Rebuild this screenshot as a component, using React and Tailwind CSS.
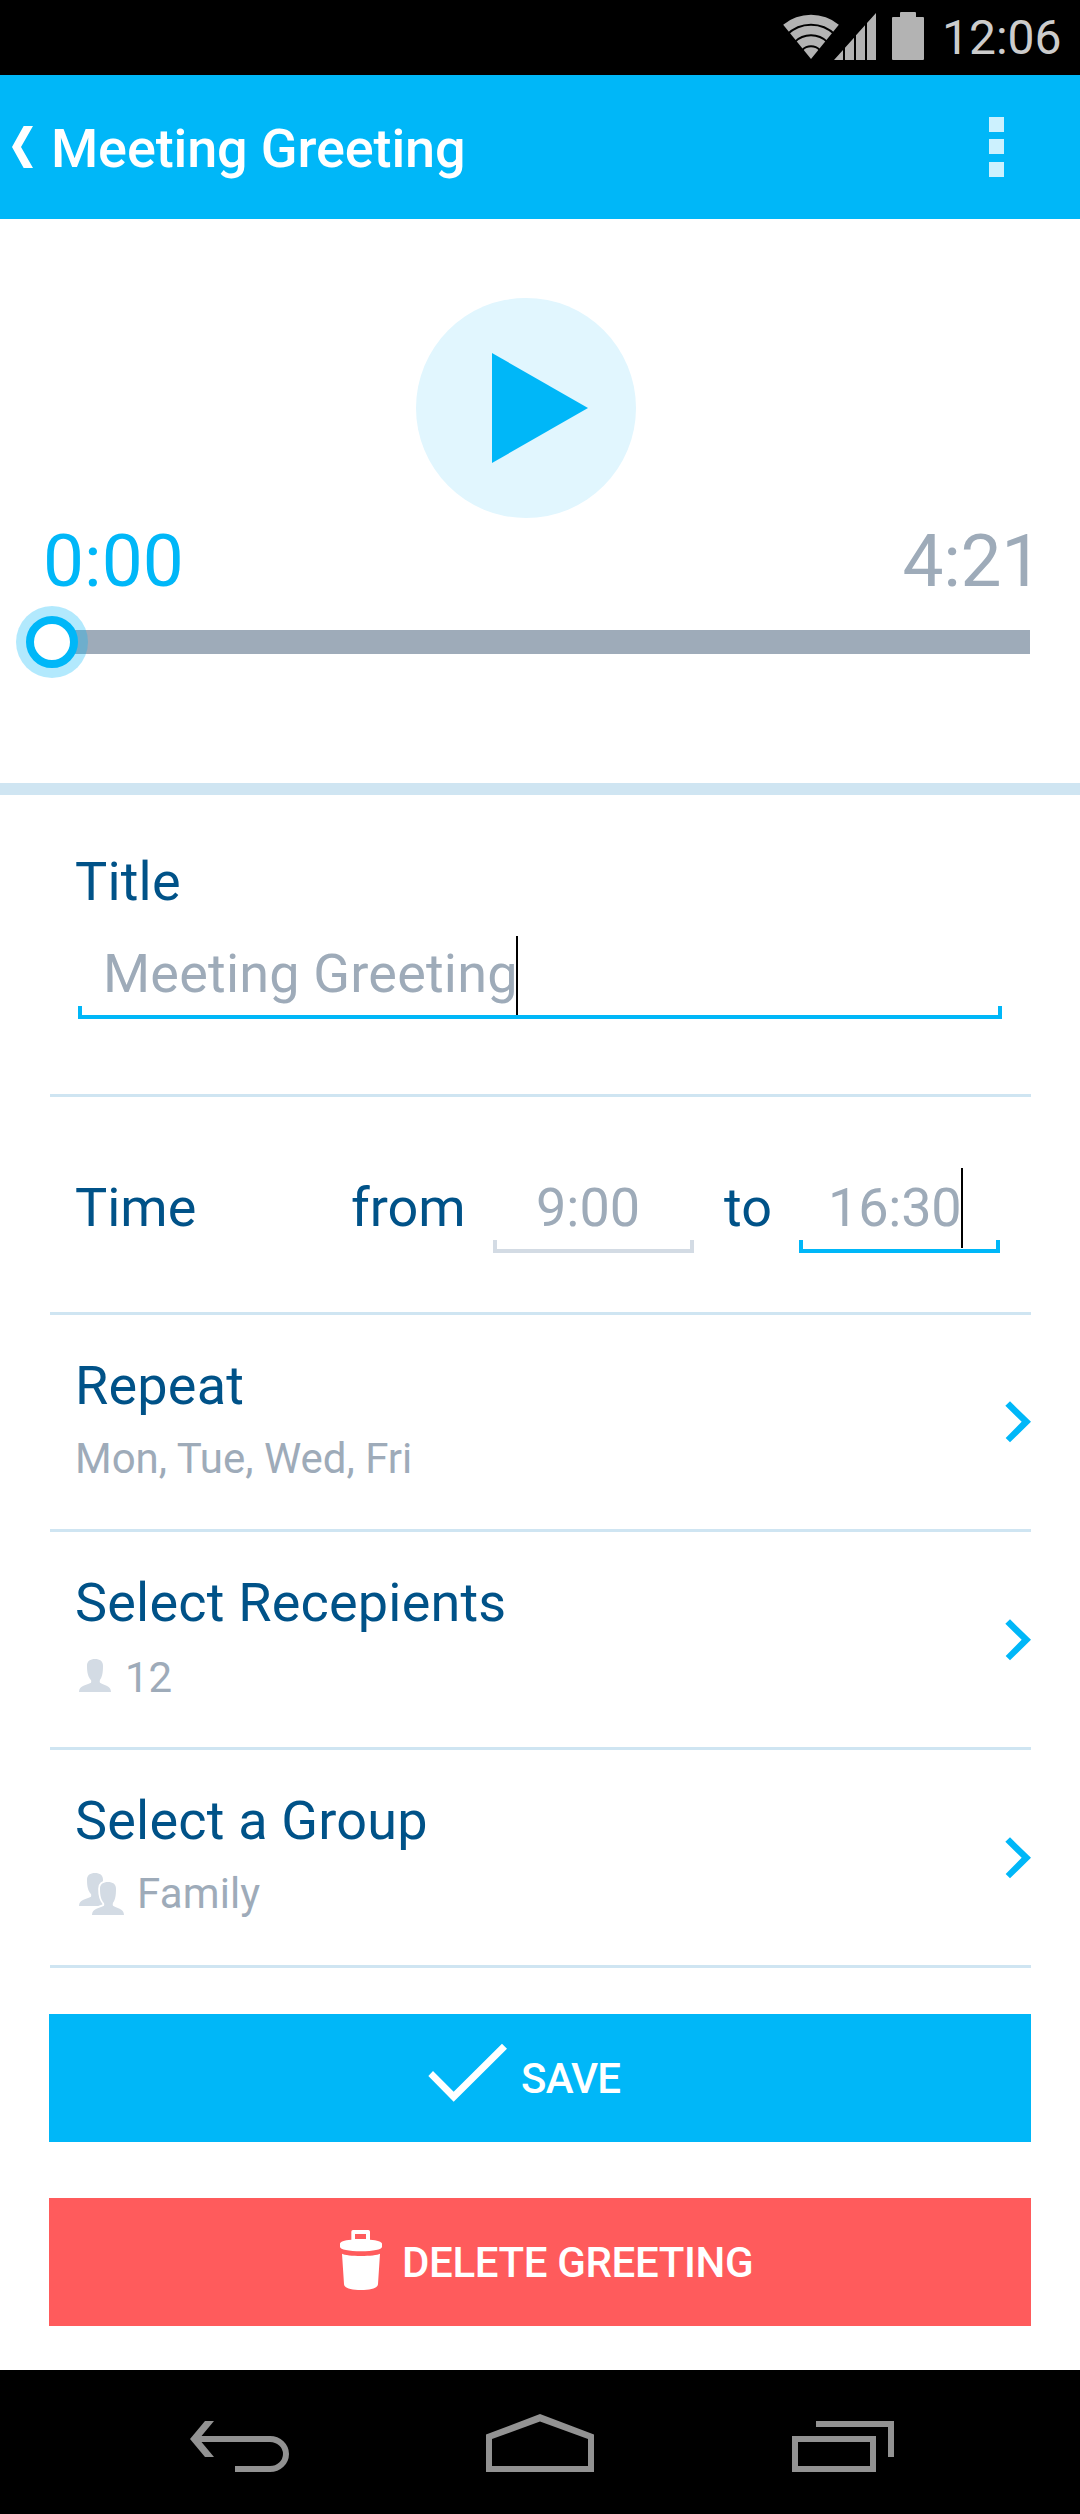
import React from "react";

const PERSON =
  "M48 0C62 0 72 6 72 20C72 42 69 54 63 62C62 66 62 68 63 71C72 78 96 78 96 99H0C0 78 24 78 36 71C37 68 37 66 36 63C28 54 24 42 24 20C24 6 34 0 48 0Z";

function StatusBar() {
  return (
    <div className="flex h-[75px] items-start bg-black pl-[783px]">
      <svg className="mt-3 h-12 w-[141px] shrink-0" viewBox="129 36 423 144">
        <path d="M213 177L129.500 74A132 132 0 0 1 296.500 74Z" fill="#b3b3b3" />
        <g fill="none" stroke="#000" strokeWidth="6">
          <circle cx="213" cy="176" r="102" />
          <circle cx="213" cy="176" r="70" />
          <circle cx="213" cy="176" r="37" />
        </g>
        <path
          d="M282 180L309 150V180ZM315 180V143L342 113V180ZM348 180V106L375 76V180ZM381 180V69L408 39V180Z"
          fill="#b3b3b3"
        />
        <path
          d="M480 51V39Q480 36 483 36H525Q528 36 528 39V51H549Q552 51 552 54V177Q552 180 549 180H459Q456 180 456 177V54Q456 51 459 51Z"
          fill="#b3b3b3"
        />
      </svg>
      <span className="ml-[18px] mt-[14px] text-[48px] leading-[48px] text-[#cccccc]">12:06</span>
    </div>
  );
}

function Header() {
  return (
    <header className="flex h-36 items-start bg-[#00b7f8] pl-3 pr-[76px]">
      <svg className="mt-[51px] h-[42px] w-[21px] shrink-0" viewBox="36 168 63 126">
        <path d="M71 168H99L63 231L99 294H71L36 231Z" fill="#fff" />
      </svg>
      <h1 className="ml-[18px] mt-[47px] text-[54px] font-medium leading-[54px] tracking-[-0.13px] text-white">
        Meeting Greeting
      </h1>
      <div className="ml-auto mt-[42px] flex flex-col">
        <span className="size-[15px] bg-[#ccf1fe]" />
        <span className="mt-[7px] size-[15px] bg-[#ccf1fe]" />
        <span className="mt-2 size-[15px] bg-[#ccf1fe]" />
      </div>
    </header>
  );
}

function Player() {
  return (
    <section className="h-[576px] border-b-[12px] border-[#cfe5f2] pt-[79px]">
      <div className="ml-[416px] size-[220px] rounded-full bg-[#e1f6fe]">
        <svg className="size-full" viewBox="0 0 220 220">
          <path d="M76 55L172 110L76 165Z" fill="#00b7f8" />
        </svg>
      </div>
      <div className="mt-[7px] flex justify-between pl-[43px] pr-[38px] text-[73px] leading-[73px]">
        <span className="text-[#00b7f8]">0:00</span>
        <span className="tracking-[-0.3px] text-[#9eabb9]">4:21</span>
      </div>
      <div className="relative ml-[52px] mr-[50px] mt-8 h-6 bg-[#9eabb9]">
        <div className="absolute -left-9 -top-6 flex size-[72px] items-center justify-center rounded-full bg-[#00b7f8]/30">
          <div className="size-[52px] rounded-full border-8 border-[#00b7f8] bg-white" />
        </div>
      </div>
    </section>
  );
}

function Underline({ tone }) {
  return <div className={`h-[13px] border-x-4 border-b-4 ${tone}`} />;
}

function Caret() {
  return <span className="h-20 w-0.5 bg-black" />;
}

function Chevron() {
  return (
    <svg className="h-[42px] w-[26px] shrink-0" viewBox="0 0 78 126">
      <path d="M1 14L15 1L78 62.500L15 124L2 111L50 62.500Z" fill="#00b7f8" />
    </svg>
  );
}

function Row({ label, height, gap, children }) {
  return (
    <div className={`flex items-center justify-between border-b-[3px] border-[#cfe5f2] ${height}`}>
      <div className="self-start pl-[25px] pt-11">
        <div className="text-[54px] leading-[54px] tracking-[0.2px] text-[#005288]">{label}</div>
        <div className={`flex text-[42px] leading-[42px] text-[#9eabb9] ${gap}`}>{children}</div>
      </div>
      <Chevron />
    </div>
  );
}

export default function App() {
  return (
    <div className="flex h-[2514px] w-[1080px] flex-col overflow-hidden bg-white font-['Roboto',sans-serif]">
      <StatusBar />
      <Header />
      <Player />

      <main className="flex flex-col pl-[50px] pr-[49px]">
        <div className="h-[302px] border-b-[3px] border-[#cfe5f2] pt-[60px]">
          <div className="pl-[25px] text-[54px] leading-[54px] tracking-[0.2px] text-[#005288]">Title</div>
          <div className="ml-7 mt-[27px] w-[924px]">
            <div className="flex h-[70px] pl-[25px]">
              <span className="mt-[11px] whitespace-nowrap text-[54px] leading-[54px] tracking-[0.2px] text-[#9eabb9]">
                Meeting Greeting
              </span>
              <span className="-ml-0.5 h-[79px] w-0.5 shrink-0 bg-black" />
            </div>
            <Underline tone="border-[#00b7f8]" />
          </div>
        </div>

        <div className="flex h-[218px] items-start border-b-[3px] border-[#cfe5f2] text-[54px] leading-[54px] text-[#005288]">
          <span className="ml-[25px] mt-[84px] w-[276px]">Time</span>
          <span className="mt-[84px] w-[142px]">from</span>
          <div className="mt-[71px] w-[201px] text-[#9eabb9]">
            <div className="flex h-[72px] pl-[43px] pt-[13px]">9:00</div>
            <Underline tone="border-[#d3dbe4]" />
          </div>
          <span className="ml-[30px] mt-[84px] w-[75px]">to</span>
          <div className="mt-[71px] w-[201px] text-[#9eabb9]">
            <div className="flex h-[72px] pl-[29px]">
              <span className="mt-[13px] w-[133px] tracking-[-0.2px]">16:30</span>
              <Caret />
            </div>
            <Underline tone="border-[#00b7f8]" />
          </div>
        </div>

        <Row label="Repeat" height="h-[217px]" gap="mt-[25px]">
          <span>Mon, Tue, Wed, Fri</span>
        </Row>
        <Row label="Select Recepients" height="h-[218px]" gap="mt-[27px]">
          <svg className="ml-1 mt-0.5 h-[33px] w-8" viewBox="0 0 96 99">
            <path d={PERSON} fill="#d3dbe4" />
          </svg>
          <span className="ml-[14px]">12</span>
        </Row>
        <Row label="Select a Group" height="h-[218px]" gap="mt-[25px]">
          <svg className="ml-1 h-[42px] w-[45px]" viewBox="0 0 135 126">
            <path d={PERSON} fill="#d3dbe4" />
            <path d={PERSON} transform="translate(39 27)" fill="#fff" stroke="#fff" strokeWidth="11" />
            <path d={PERSON} transform="translate(39 27)" fill="#d3dbe4" />
          </svg>
          <span className="ml-[13px] tracking-[0.15px]">Family</span>
        </Row>
      </main>

      <div className="mt-[46px] flex flex-col gap-14 pl-[49px] pr-[49px] text-[42px] font-medium leading-[42px] text-white">
        <button className="flex h-32 items-start bg-[#00b7f8] pl-[379px]">
          <svg className="mt-[29px] h-[60px] w-[80px] shrink-0" viewBox="384 129 240 180">
            <path d="M385 228L399 213L461 275L606 131L621 146L461 305Z" fill="#fff" />
          </svg>
          <span className="ml-[13px] mt-11 tracking-[-0.8px]">SAVE</span>
        </button>
        <button className="flex h-32 items-start bg-[#ff5b5c] pl-[291px]">
          <svg className="mt-8 h-[60px] w-[42px] shrink-0" viewBox="120 690 126 180">
            <path
              fillRule="evenodd"
              d="M154 719V695Q154 690 159 690H205Q210 690 210 695V719C232 720 246 726 246 731V741C246 748 219 754 183 754S120 748 120 741V731C120 726 132 720 154 719ZM165 717H198V702H165Z"
              fill="#fff"
            />
            <path
              d="M126 761C140 770 226 770 240 761L234 852C234 864 213 870 183 870S132 864 132 852Z"
              fill="#fff"
            />
          </svg>
          <span className="ml-5 mt-11 whitespace-nowrap tracking-[-0.35px]">DELETE GREETING</span>
        </button>
      </div>

      <nav className="mt-auto flex h-36 items-start bg-black pl-[190px]">
        <svg className="mt-[51px] h-[51px] w-[99px]" viewBox="0 0 99 51">
          <path d="M15 0H24L11.500 15H80A19 18 0 0 1 80 51H45V45H80A13 12 0 0 0 80 21H11.500L24 36H15L0 18Z" fill="#929292" />
        </svg>
        <svg className="ml-[197px] mt-11 h-[58px] w-[108px]" viewBox="0 0 108 58">
          <path fillRule="evenodd" d="M0 20.500L54 0L108 20.500V58H0ZM6 52H102V25L54 7.500L6 25Z" fill="#929292" />
        </svg>
        <svg className="ml-[198px] mt-[51px] h-[51px] w-[102px]" viewBox="0 0 102 51">
          <path fillRule="evenodd" d="M0 15H84V51H0ZM6 21V45H78V21ZM24 0H102V36H96V6H24Z" fill="#929292" />
        </svg>
      </nav>
    </div>
  );
}
